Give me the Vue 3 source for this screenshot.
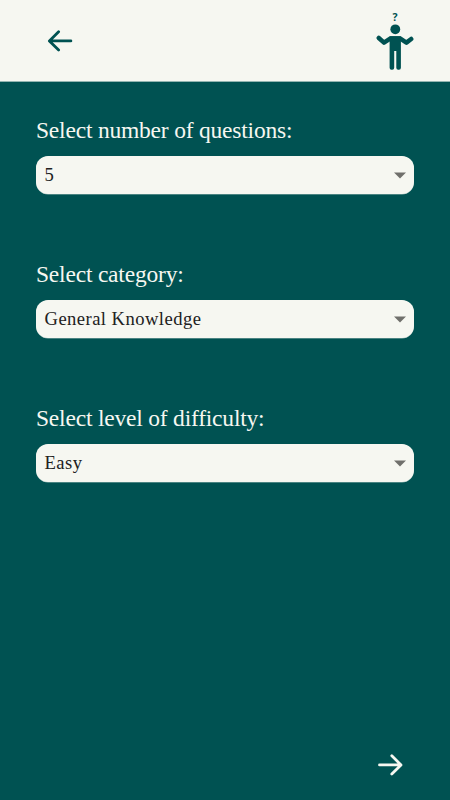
<script setup>
import { ref } from 'vue'

const fields = ref([
  { label: 'Select number of questions:', value: '5' },
  { label: 'Select category:', value: 'General Knowledge' },
  { label: 'Select level of difficulty:', value: 'Easy' },
])
</script>

<template>
  <div class="screen">
    <header class="header">
      <button class="icon-button" aria-label="Back">
        <svg width="26" height="22" viewBox="0 0 26 22" class="arrow">
          <path d="M11.6 1.7 2.4 10.9l9.2 9.2M2.8 10.9H23.9" />
        </svg>
      </button>
      <div class="logo">
        <span class="mark">?</span>
        <svg width="38" height="46" viewBox="0 0 38 46">
          <circle cx="19.3" cy="5.3" r="4.9" />
          <path class="arms" d="M2.8 14 8 18.6 14.5 14.4H24L30.4 18.6 35.2 15" />
          <path d="M13.6 12.3h11.3v31.5a1.9 1.9 0 0 1-1.9 1.9h-.8a1.9 1.9 0 0 1-1.9-1.9V27h-2.1v16.8a1.9 1.9 0 0 1-1.9 1.9h-.8a1.9 1.9 0 0 1-1.9-1.9z" />
        </svg>
      </div>
    </header>
    <main class="form">
      <div v-for="field in fields" :key="field.label" class="field">
        <div class="label">{{ field.label }}</div>
        <div class="select" role="combobox">
          <span>{{ field.value }}</span>
          <svg width="12" height="7" viewBox="0 0 12 7"><path d="M0 .6h12L6 6.6z" /></svg>
        </div>
      </div>
    </main>
    <footer class="footer">
      <button class="icon-button" aria-label="Next">
        <svg width="26" height="22" viewBox="0 0 26 22" class="arrow">
          <path d="M14.8 1.7 24 10.9l-9.2 9.2M23.6 10.9H2.5" />
        </svg>
      </button>
    </footer>
  </div>
</template>

<style>
body {
  margin: 0;
}
</style>

<style scoped>
.screen {
  box-sizing: border-box;
  height: 800px;
  display: flex;
  flex-direction: column;
  background: #005252;
  color: #f6f7f1;
  font-family: "Liberation Serif", "Times New Roman", serif;
}
.header {
  box-sizing: border-box;
  height: 82px;
  flex: none;
  display: flex;
  justify-content: space-between;
  align-items: flex-start;
  padding: 10px 36px 0 47px;
  border-bottom: 1px solid #94b5b1;
  background: #f6f7f1;
  color: #005252;
}
.icon-button {
  display: block;
  padding: 0;
  border: 0;
  background: none;
  color: inherit;
}
.header .icon-button {
  margin-top: 20px;
}
.arrow {
  display: block;
  fill: none;
  stroke: currentColor;
  stroke-width: 2.8;
  stroke-linecap: round;
  stroke-linejoin: round;
}
.logo {
  display: flex;
  flex-direction: column;
  align-items: center;
}
.logo svg {
  display: block;
  fill: currentColor;
}
.mark {
  font: bold 10.5px/14px "Open Sans", sans-serif;
}
.arms {
  fill: none;
  stroke: currentColor;
  stroke-width: 4.5;
  stroke-linecap: round;
  stroke-linejoin: round;
}
.form {
  flex: 1;
  display: flex;
  flex-direction: column;
  gap: 66px;
  padding: 34px 36px 0;
}
.field {
  display: flex;
  flex-direction: column;
  gap: 12px;
}
.label {
  height: 28px;
  font-size: 23.5px;
  line-height: 28px;
  letter-spacing: -0.2px;
  white-space: nowrap;
}
.select {
  box-sizing: border-box;
  height: 38px;
  display: flex;
  align-items: center;
  justify-content: space-between;
  padding: 0 8px 0 8.5px;
  border-radius: 12px;
  background: #f6f7f1;
  box-shadow: 0 0.5px 0 #94b5b1;
  color: #212121;
  font-size: 18.6px;
  letter-spacing: 0.45px;
}
.select svg {
  fill: #70706c;
}
.footer {
  display: flex;
  justify-content: flex-end;
  padding: 0 47px 24px 0;
}
</style>
